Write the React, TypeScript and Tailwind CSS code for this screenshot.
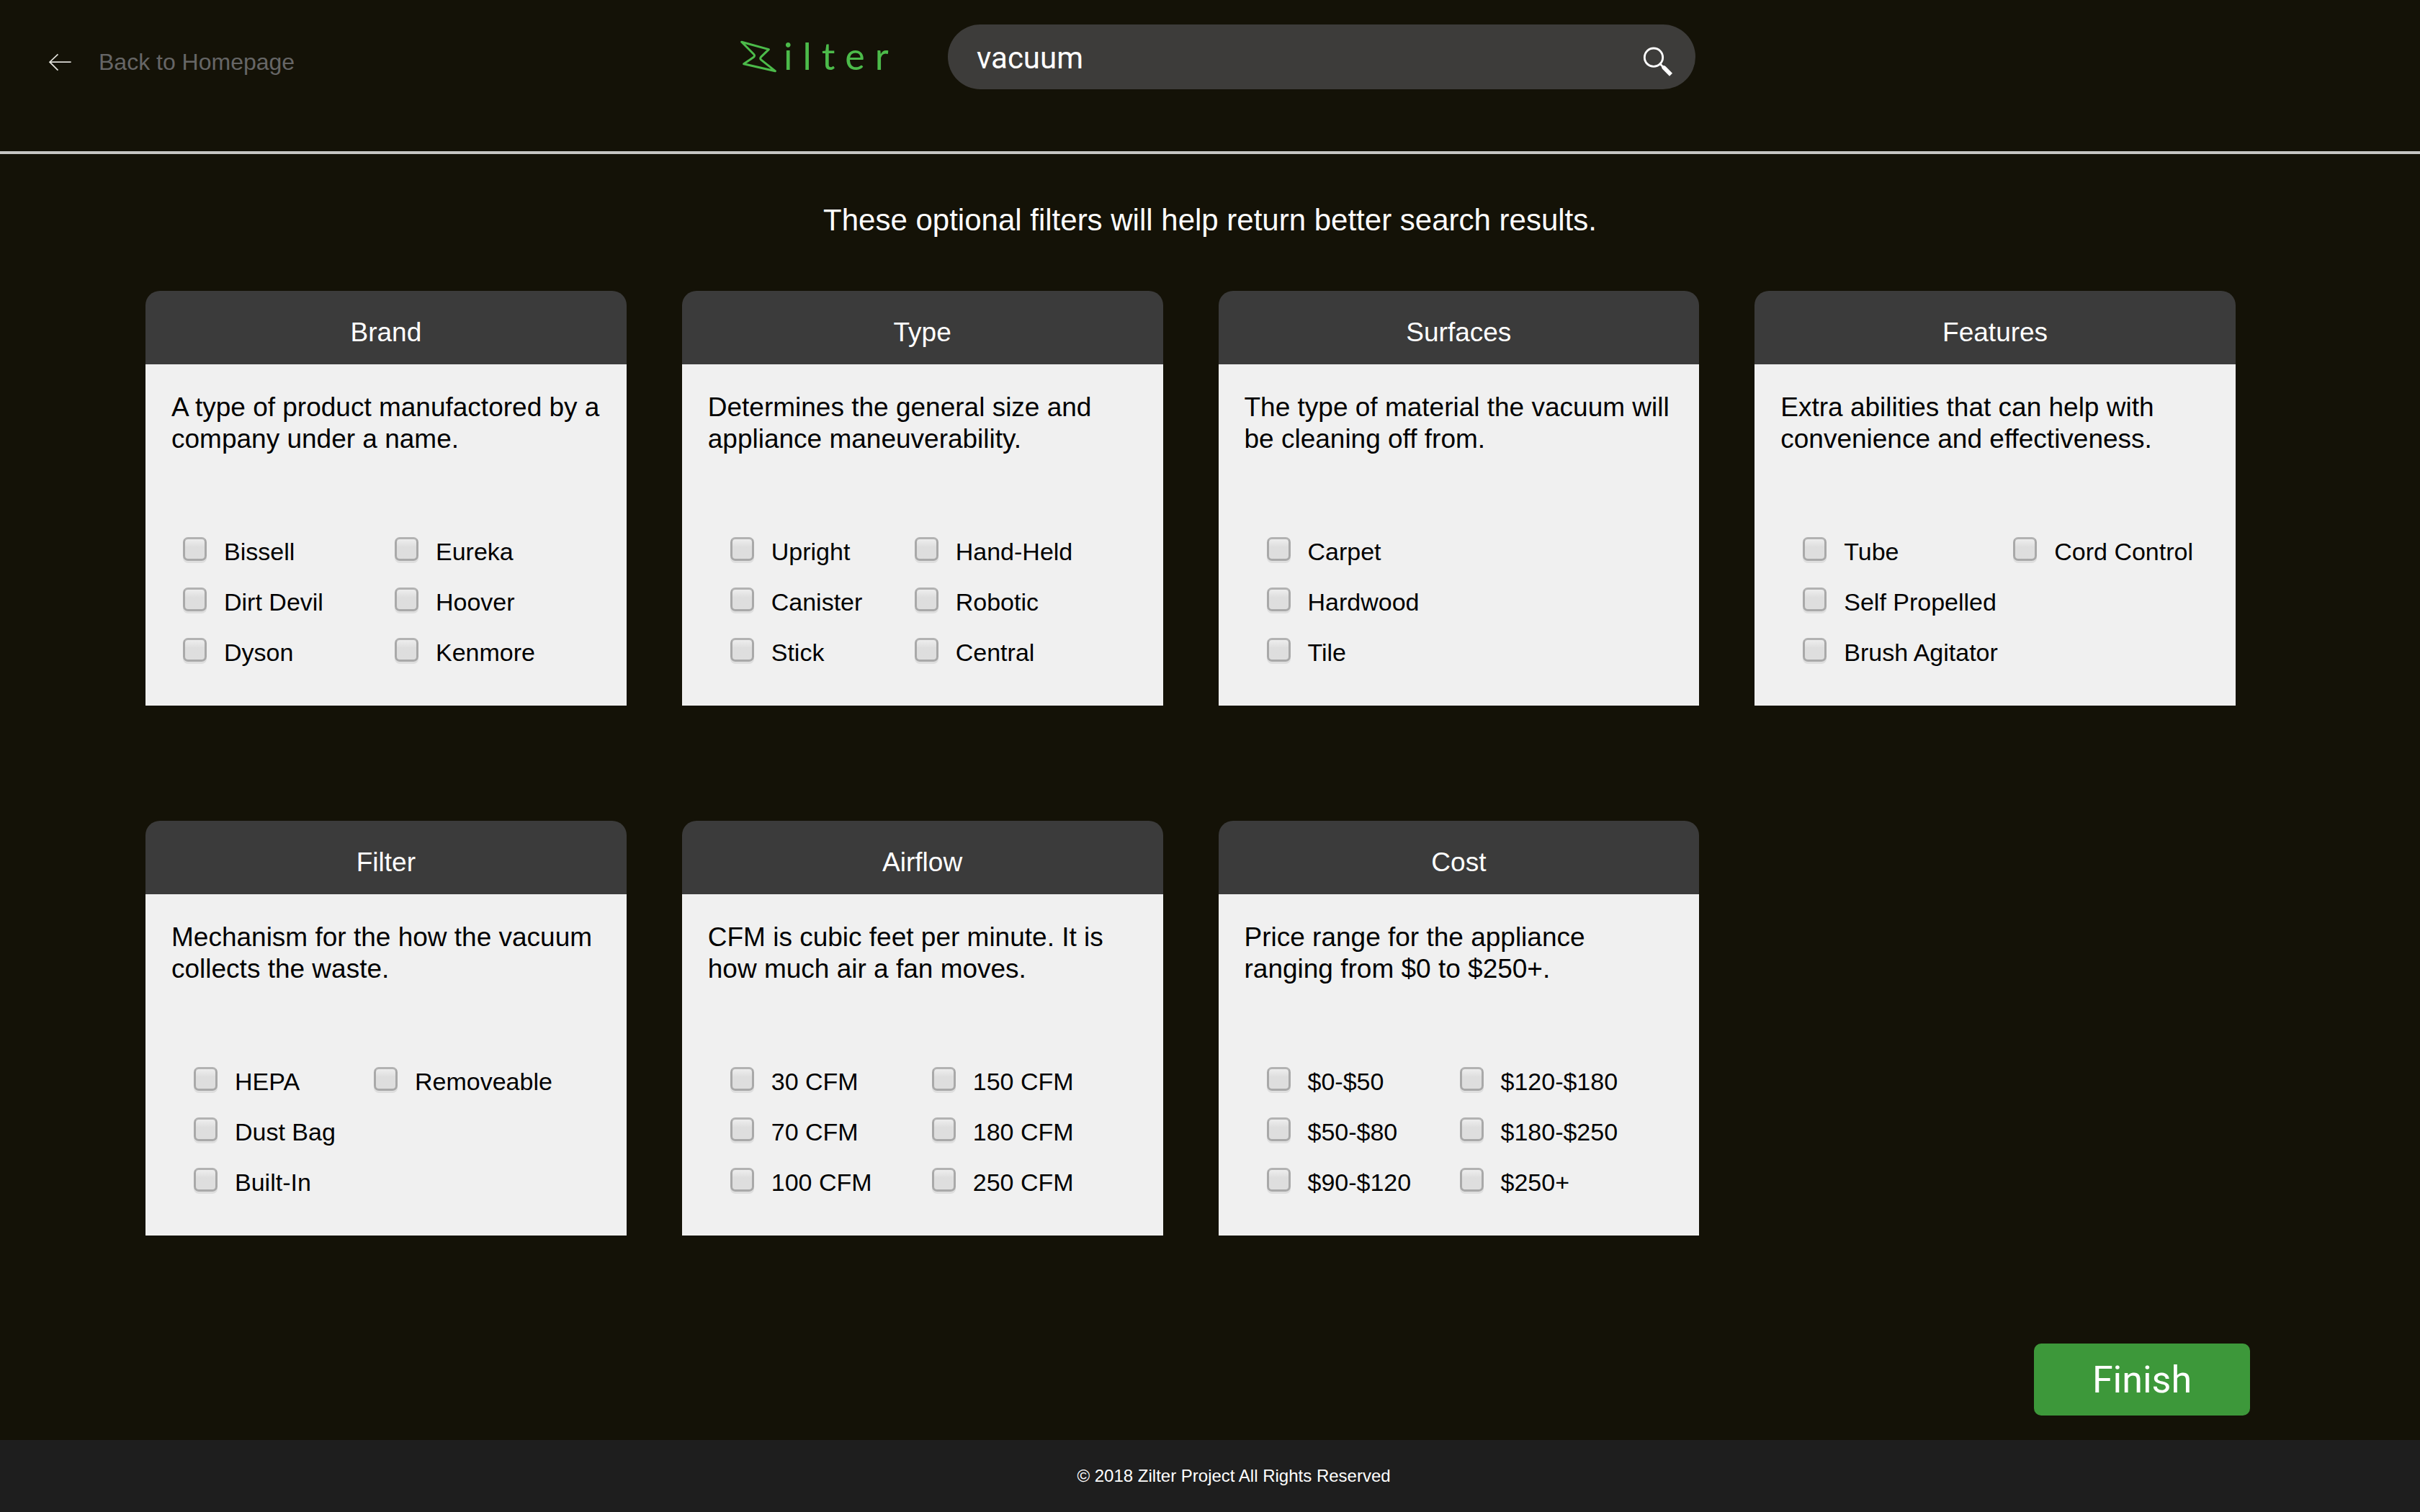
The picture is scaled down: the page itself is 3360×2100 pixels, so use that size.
import { useState } from "react";

type FilterGroup = {
  title: string;
  description: string;
  // Option columns, left to right
  columns: string[][];
  optionsClass: string;
};

const groups: FilterGroup[] = [
  {
    title: "Brand",
    description: "A type of product manufactored by a company under a name.",
    columns: [
      ["Bissell", "Dirt Devil", "Dyson"],
      ["Eureka", "Hoover", "Kenmore"],
    ],
    optionsClass: "pl-[52px] grid-cols-[294px_auto]",
  },
  {
    title: "Type",
    description: "Determines the general size and appliance maneuverability.",
    columns: [
      ["Upright", "Canister", "Stick"],
      ["Hand-Held", "Robotic", "Central"],
    ],
    optionsClass: "pl-[67px] grid-cols-[256px_auto]",
  },
  {
    title: "Surfaces",
    description: "The type of material the vacuum will be cleaning off from.",
    columns: [["Carpet", "Hardwood", "Tile"]],
    optionsClass: "pl-[67px] grid-cols-[auto]",
  },
  {
    title: "Features",
    description: "Extra abilities that can help with convenience and effectiveness.",
    columns: [["Tube", "Self Propelled", "Brush Agitator"], ["Cord Control"]],
    optionsClass: "pl-[67px] grid-cols-[292px_auto]",
  },
  {
    title: "Filter",
    description: "Mechanism for the how the vacuum collects the waste.",
    columns: [["HEPA", "Dust Bag", "Built-In"], ["Removeable"]],
    optionsClass: "pl-[67px] grid-cols-[250px_auto]",
  },
  {
    title: "Airflow",
    description: "CFM is cubic feet per minute. It is how much air a fan moves.",
    columns: [
      ["30 CFM", "70 CFM", "100 CFM"],
      ["150 CFM", "180 CFM", "250 CFM"],
    ],
    optionsClass: "pl-[67px] grid-cols-[280px_auto]",
  },
  {
    title: "Cost",
    description: "Price range for the appliance ranging from $0 to $250+.",
    columns: [
      ["$0-$50", "$50-$80", "$90-$120"],
      ["$120-$180", "$180-$250", "$250+"],
    ],
    optionsClass: "pl-[67px] grid-cols-[268px_auto]",
  },
];

function BackArrow() {
  return (
    <svg viewBox="200 225 98 74" className="h-[25px] w-[33px] shrink-0" fill="none" stroke="#e4e4de" strokeWidth="5" aria-hidden="true">
      <path d="M294 261H206" />
      <path d="M240 229L206 261L240 295" />
    </svg>
  );
}

function LogoMark() {
  return (
    <svg
      viewBox="84 100 154 140"
      className="h-[47px] w-[51px] shrink-0"
      fill="none"
      stroke="#4cbb4a"
      strokeWidth="9"
      strokeLinejoin="round"
      aria-hidden="true"
    >
      <path d="M89 109L203 140L171 171Q164 178 171 184L230 231L98 201L138 174Q147 167 140 160Z" />
    </svg>
  );
}

function SearchIcon() {
  return (
    <svg viewBox="300 160 132 132" className="h-11 w-11" aria-hidden="true">
      <circle cx="348" cy="210" r="38" fill="none" stroke="#fff" strokeWidth="8.5" />
      <path d="M373 235L386 249" stroke="#fff" strokeWidth="8" />
      <path d="M381 249L388 244Q394 244 398 248L426 276L414 288L385 259Q381 255 381 249Z" fill="#fff" />
    </svg>
  );
}

function Option({ label }: { label: string }) {
  return (
    <label className="flex items-start gap-6 text-[34px] leading-10 whitespace-nowrap">
      <input
        type="checkbox"
        className="h-[33px] w-[33px] shrink-0 appearance-none rounded-[7px] border-[3px] border-[#a9a9a9] border-t-[#b2b2b2] bg-linear-to-b from-[#eeeeee] via-[#dedede] via-40% to-[#dedede] shadow-[0_3px_0_#dedede] checked:bg-[#3d983a] checked:bg-none"
      />
      <span>{label}</span>
    </label>
  );
}

function FilterCard({ group }: { group: FilterGroup }) {
  return (
    <section className="text-black">
      <h2 className="rounded-t-[20px] bg-[#3b3b3b] pt-[14px] text-center text-[37px] leading-[88px] text-white">
        {group.title}
      </h2>
      <div className="bg-[#f0f0f0] pt-[38px] pb-[54px]">
        <p className="px-9 text-[37px] leading-[44px]">{group.description}</p>
        <div className={`mt-[114px] grid ${group.optionsClass}`}>
          {group.columns.map((options) => (
            <div key={options[0]} className="flex flex-col gap-[30px]">
              {options.map((option) => (
                <Option key={option} label={option} />
              ))}
            </div>
          ))}
        </div>
      </div>
    </section>
  );
}

export default function App() {
  const [query, setQuery] = useState("vacuum");

  return (
    <div className="flex min-h-screen flex-col bg-[#141207] font-['Liberation_Sans',Arial,sans-serif] text-white">
      <header className="grid h-[214px] grid-cols-[minmax(0,1028fr)_minmax(0,1326fr)_minmax(0,1006fr)] items-start border-b-4 border-[#c6c6c3]">
        <a href="#home" className="flex items-center gap-[37px] pt-16 pl-[67px] text-[32px] leading-[44px] text-[#666666]">
          <BackArrow />
          Back to Homepage
        </a>
        <div className="flex items-start pt-[34px]">
          <a href="#zilter" className="flex w-[288px] shrink-0 items-end gap-[9px] pt-[18px] text-[#4cbb4a]" aria-label="Zilter">
            <LogoMark />
            <span className="font-[Lato,sans-serif] text-[52px] leading-[50px] tracking-[14px]">ilter</span>
          </a>
          <form
            className="flex h-[90px] flex-1 items-center rounded-full bg-[#3d3c3a] pr-[30px] pl-10"
            onSubmit={(event) => event.preventDefault()}
          >
            <input
              type="text"
              aria-label="Search products"
              value={query}
              onChange={(event) => setQuery(event.target.value)}
              className="min-w-0 flex-1 bg-transparent pt-1 font-[Roboto,sans-serif] text-[42px] leading-[50px] text-white outline-none"
            />
            <button type="submit" aria-label="Search" className="pt-3">
              <SearchIcon />
            </button>
          </form>
        </div>
      </header>

      <main className="flex flex-1 flex-col">
        <h1 className="mt-[68px] text-center text-[42px] leading-[48px]">
          These optional filters will help return better search results.
        </h1>
        <div className="mt-[74px] mr-[256px] ml-[202px] grid grid-cols-4 gap-x-[77px] gap-y-40">
          {groups.map((group) => (
            <FilterCard key={group.title} group={group} />
          ))}
        </div>
        <button
          type="button"
          className="mt-[150px] mr-[236px] mb-[34px] h-[100px] w-[300px] self-end rounded-[10px] bg-[#3d983a] pt-0.5 font-[Roboto,sans-serif] text-[52px] leading-[60px]"
        >
          Finish
        </button>
      </main>

      <footer className="bg-[#1e1e1e] pl-[66px] text-center text-2xl leading-[100px]">
        © 2018 Zilter Project All Rights Reserved
      </footer>
    </div>
  );
}
